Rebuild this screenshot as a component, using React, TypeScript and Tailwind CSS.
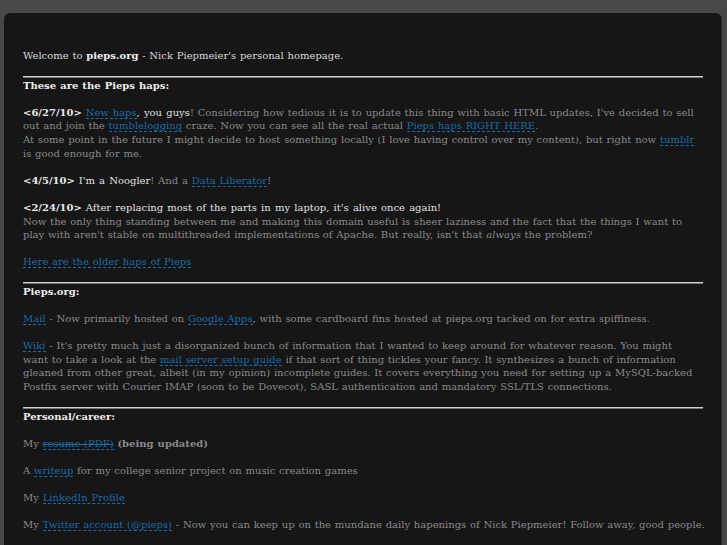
import React from "react";

const A = ({ children }: { children: React.ReactNode }) => (
  <a className="text-[#1a6aa8] border-b border-dashed border-[#1a6aa8] no-underline">{children}</a>
);

const B = ({ children }: { children: React.ReactNode }) => (
  <b className="text-[#e8e8e8] font-bold">{children}</b>
);

const W = ({ children }: { children: React.ReactNode }) => (
  <span className="text-[#e0e0e0] [word-spacing:1px]">{children}</span>
);

const Hr = () => <div className="h-[2px] bg-[#cfcfcf] border-b border-[#777]" />;

export default function App() {
  return (
    <div
      className="min-h-[545px] w-full bg-[#484848] pt-[13px] pl-[4px] pr-[5px] text-[10px] leading-[13.6px] text-[#8a8a8a] [word-spacing:0.6px]"
      style={{ fontFamily: '"DejaVu Serif", serif' }}
    >
      <div className="min-h-[532px] bg-[#161616] rounded-t-[6px] border-r border-[#2a2a2a] pl-[19px] pr-[18px] pt-[36px] whitespace-nowrap">
        <p className="text-[#d8d8d8]">
          Welcome to <b className="font-bold text-[#eee]">pieps.org</b> - Nick Piepmeier's personal homepage.
        </p>

        <div className="mt-[13px]">
          <Hr />
        </div>
        <h2 className="mt-[1px] font-bold text-[#eee]">These are the Pieps haps:</h2>

        <p className="mt-[13.6px]">
          <B>&lt;6/27/10&gt;</B> <A>New haps</A><W>, you guys</W>! Considering how tedious it is to update this thing with basic HTML updates, I've decided to sell
          <br />
          out and join the <A>tumblelogging</A> craze. Now you can see all the real actual <A>Pieps haps RIGHT HERE</A>.
          <br />
          At some point in the future I might decide to host something locally (I love having control over my content), but right now <A>tumblr</A>
          <br />
          is good enough for me.
        </p>

        <p className="mt-[13.6px]">
          <B>&lt;4/5/10&gt;</B> <W>I'm a Noogler</W>! And a <A>Data Liberator</A>!
        </p>

        <p className="mt-[13.6px]">
          <B>&lt;2/24/10&gt;</B> <W>After replacing most of the parts in my laptop, it's alive once again!</W>
          <br />
          Now the only thing standing between me and making this domain useful is sheer laziness and the fact that the things I want to
          <br />
          play with aren't stable on multithreaded implementations of Apache. But really, isn't that <i>always</i> the problem?
        </p>

        <p className="mt-[13.6px]">
          <A>Here are the older haps of Pieps</A>
        </p>

        <div className="mt-[13px]">
          <Hr />
        </div>
        <h2 className="mt-[1px] font-bold text-[#eee]">Pieps.org:</h2>

        <p className="mt-[13.6px]">
          <A>Mail</A> - Now primarily hosted on <A>Google Apps</A>, with some cardboard fins hosted at pieps.org tacked on for extra spiffiness.
        </p>

        <p className="mt-[13.6px]">
          <A>Wiki</A> - It's pretty much just a disorganized bunch of information that I wanted to keep around for whatever reason. You might
          <br />
          want to take a look at the <A>mail server setup guide</A> if that sort of thing tickles your fancy. It synthesizes a bunch of information
          <br />
          gleaned from other great, albeit (in my opinion) incomplete guides. It covers everything you need for setting up a MySQL-backed
          <br />
          Postfix server with Courier IMAP (soon to be Dovecot), SASL authentication and mandatory SSL/TLS connections.
        </p>

        <div className="mt-[13px]">
          <Hr />
        </div>
        <h2 className="mt-[1px] font-bold text-[#eee]">Personal/career:</h2>

        <p className="mt-[13.6px]">
          My <A><s>resume (PDF)</s></A> <b className="font-bold text-[#8a8a8a]">(being updated)</b>
        </p>

        <p className="mt-[13.6px]">
          A <A>writeup</A> for my college senior project on music creation games
        </p>

        <p className="mt-[13.6px]">
          My <A>LinkedIn Profile</A>
        </p>

        <p className="mt-[13.6px]">
          My <A>Twitter account (@pieps)</A> - Now you can keep up on the mundane daily hapenings of Nick Piepmeier! Follow away, good people.
        </p>
      </div>
    </div>
  );
}
